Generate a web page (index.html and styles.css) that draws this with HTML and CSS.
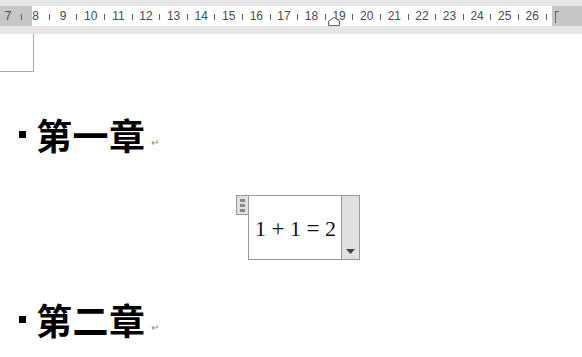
FILE: index.html
```html
<!DOCTYPE html>
<html>
<head>
<meta charset="utf-8">
<link rel="stylesheet" href="styles.css">
</head>
<body>
<div class="ruler">
  <div class="band">
    <div class="nums">
      <span class="n">7</span><span class="n">8</span><span class="n">9</span><span class="n">10</span><span class="n">11</span><span class="n">12</span><span class="n">13</span><span class="n">14</span><span class="n">15</span><span class="n">16</span><span class="n">17</span><span class="n">18</span><span class="n">19</span><span class="n">20</span><span class="n">21</span><span class="n">22</span><span class="n">23</span><span class="n">24</span><span class="n">25</span><span class="n">26</span>
    </div>
    <span class="bracket"></span>
    <svg class="marker" width="12" height="9" viewBox="0 0 12 9"><path d="M0.5 8.5 V4 L6 0.5 L11.5 4 V8.5 Z" fill="#fff" stroke="#666" stroke-width="1"/></svg>
  </div>
</div>
<div class="page">
  <div class="corner"></div>
  <div class="heading h1"><span class="bullet"></span><span class="txt">第一章</span><span class="ret">↵</span></div>
  <div class="eqrow">
    <div class="eq">
      <span class="handle"><i></i><i></i><i></i></span>
      <span class="eqtext"><span>1</span><span class="op">+</span><span>1</span><span class="op">=</span><span>2</span></span>
      <span class="eqside"><svg width="9" height="5" viewBox="0 0 9 5"><path d="M0 0 H9 L4.5 5 Z" fill="#444"/></svg></span>
    </div>
  </div>
  <div class="heading h2"><span class="bullet"></span><span class="txt">第二章</span><span class="ret">↵</span></div>
</div>
</body>
</html>
```
FILE: styles.css
```css
html, body { margin: 0; padding: 0; background: #fff; }
body { width: 582px; height: 357px; overflow: hidden; font-family: "Liberation Sans", Arial, sans-serif; }
.ruler { background: #e6e6e6; padding: 6px 0 8px; height: 20px; }
.band { position: relative; height: 20px; background: linear-gradient(to right, #c6c6c6 0 32px, #fff 32px 552px, #c6c6c6 552px 582px); overflow: hidden; }
.nums { display: flex; margin-left: -5.8px; height: 20px; align-items: center; }
.n { flex: 0 0 27.6px; width: 27.6px; text-align: center; font-size: 12px; color: #4a4a4a; position: relative; line-height: 20px; }
.n::after { content: ""; position: absolute; right: -0.5px; top: 8px; width: 1px; height: 6px; background: #606060; }
.bracket { position: absolute; left: 555px; top: 5px; width: 3px; height: 11px; border-left: 1px solid #666; border-top: 1px solid #666; }
.marker { position: absolute; left: 328px; top: 11px; }
.page { position: relative; }
.corner { width: 34px; height: 38px; border-right: 1px solid #aaa; border-bottom: 1px solid #aaa; box-sizing: border-box; }
.heading { display: flex; align-items: center; padding-left: 19px; height: 44px; }
.h1 { margin-top: 40px; }
.h2 { margin-top: 37px; }
.bullet { width: 7px; height: 7px; background: #000; margin-right: 10px; margin-top: 1px; }
.txt { font-family: "Noto Sans CJK SC", sans-serif; font-weight: 700; font-size: 36px; line-height: 44px; color: #000; letter-spacing: 0.5px; }
.ret { font-size: 10px; color: #8a8a8a; margin-left: 5px; margin-top: 16px; }
.eqrow { display: flex; padding-left: 236px; margin-top: 39px; }
.eq { display: flex; height: 65px; position: relative; padding-left: 12px; }
.handle { position: absolute; left: 0; top: 0; width: 12px; height: 20px; box-sizing: border-box; border: 1px solid #999; border-right: none; background: #e0e0e0; display: flex; flex-direction: column; align-items: center; justify-content: center; gap: 2px; }
.handle i { display: block; width: 5px; height: 3px; background: #888; }
.eqtext { width: 93px; box-sizing: border-box; border: 1px solid #999; border-right: none; font-family: "Liberation Serif", "DejaVu Serif", serif; font-size: 22px; color: #111; display: flex; align-items: center; padding-left: 6px; padding-top: 3px; white-space: pre; }
.eqtext .op { margin: 0 5.5px; font-size: 23px; }
.eqside { width: 19px; box-sizing: border-box; border: 1px solid #999; background: #e0e0e0; display: flex; align-items: flex-end; justify-content: center; padding-bottom: 5px; }
```
